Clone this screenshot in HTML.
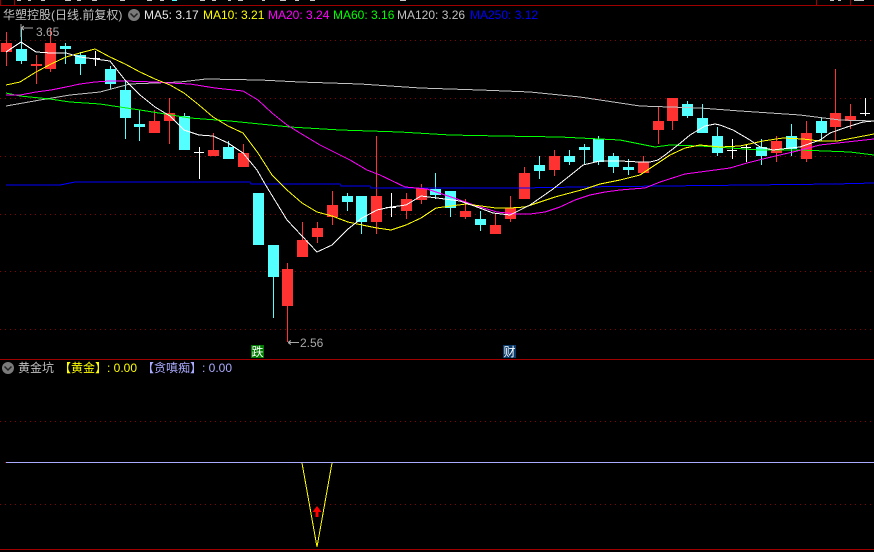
<!DOCTYPE html>
<html><head><meta charset="utf-8">
<style>
html,body{margin:0;padding:0;background:#000;}
#p{position:relative;width:874px;height:552px;overflow:hidden;background:#000;font-family:"Liberation Sans","WenQuanYi Zen Hei","Noto Sans CJK SC",sans-serif;font-size:12px;}
svg{position:absolute;left:0;top:0;}
.t{position:absolute;white-space:nowrap;line-height:14px;}
</style></head><body><div id="p">
<svg width="874" height="552" viewBox="0 0 874 552">
<g shape-rendering="crispEdges">
<rect x="0" y="5" width="874" height="1" fill="#a00000"/>
<rect x="0" y="0" width="1" height="5" fill="#a00000"/>
<rect x="14" y="0" width="1" height="5" fill="#a00000"/>
<rect x="816" y="0" width="1" height="5" fill="#a00000"/>
<rect x="850" y="0" width="1" height="5" fill="#a00000"/>
<rect x="0" y="359" width="874" height="1" fill="#a00000"/>
<rect x="0" y="549" width="874" height="1" fill="#a00000"/>
<g stroke="#8a0000" stroke-width="1" stroke-dasharray="1 4">
<path d="M0 40.5H874M0 98.5H874M0 156.5H874M0 214.5H874M0 271.5H874M0 329.5H874M0 421.5H874M0 504.5H874"/>
</g>
<path fill="#c8c8c8" d="M17 0h4v1h-4zM28 0h3v1h-3zM41 0h4v1h-4zM65 0h6v1h-6zM77 0h4v1h-4zM92 0h5v1h-5zM120 0h5v1h-5zM147 0h5v1h-5zM160 0h4v1h-4zM200 0h5v1h-5zM212 0h4v1h-4zM228 0h3v1h-3zM238 0h5v1h-5zM262 0h3v1h-3zM280 0h6v1h-6zM295 0h4v1h-4zM310 0h5v1h-5zM400 0h6v1h-6zM830 0h4v1h-4zM838 0h3v1h-3zM854 0h10v1h-10z"/>
<path fill="#54ffff" d="M172 0h5v1h-5z"/>

<!-- red candles -->
<path fill="#ff3232" d="M6 32h1v34h-1zM1 43h11v9h-11zM36 55h1v29h-1zM31 64h11v2h-11zM50 28h1v44h-1zM45 43h11v26h-11zM154 110h1v23h-1zM149 121h11v12h-11zM169 98h1v46h-1zM164 113h11v8h-11zM213 133h1v23h-1zM208 150h11v6h-11zM243 144h1v23h-1zM238 153h11v14h-11zM287 263h1v79h-1zM282 269h11v37h-11zM302 222h1v35h-1zM297 240h11v17h-11zM317 222h1v21h-1zM312 228h11v9h-11zM332 191h1v34h-1zM327 205h11v12h-11zM376 136h1v98h-1zM371 196h11v26h-11zM406 193h1v26h-1zM401 199h11v12h-11zM421 184h1v20h-1zM416 188h11v12h-11zM465 199h1v20h-1zM460 211h11v6h-11zM495 214h1v20h-1zM490 225h11v9h-11zM510 196h1v26h-1zM505 208h11v11h-11zM524 167h1v32h-1zM519 173h11v26h-11zM554 150h1v26h-1zM549 156h11v14h-11zM643 156h1v17h-1zM638 162h11v11h-11zM658 107h1v37h-1zM653 121h11v9h-11zM672 98h1v32h-1zM667 98h11v23h-11zM776 136h1v26h-1zM771 141h11v12h-11zM806 121h1v41h-1zM801 133h11v26h-11zM835 69h1v72h-1zM830 113h11v14h-11zM850 104h1v25h-1zM845 116h11v5h-11z"/>
<!-- cyan candles -->
<path fill="#54ffff" d="M21 27h1v37h-1zM16 49h11v12h-11zM65 43h1v21h-1zM60 46h11v3h-11zM80 52h1v23h-1zM75 55h11v9h-11zM110 66h1v23h-1zM105 69h11v15h-11zM125 81h1v58h-1zM120 90h11v28h-11zM139 110h1v31h-1zM134 124h11v3h-11zM184 113h1v37h-1zM179 116h11v34h-11zM228 141h1v18h-1zM223 147h11v12h-11zM253 193h11v52h-11zM273 245h1v73h-1zM268 245h11v32h-11zM347 193h1v18h-1zM342 196h11v6h-11zM361 196h1v38h-1zM356 196h11v26h-11zM435 173h1v26h-1zM430 189h11v6h-11zM450 191h1v26h-1zM445 191h11v17h-11zM480 211h1v20h-1zM475 219h11v6h-11zM539 156h1v23h-1zM534 165h11v6h-11zM569 150h1v15h-1zM564 156h11v6h-11zM584 144h1v21h-1zM579 147h11v3h-11zM598 136h1v29h-1zM593 139h11v23h-11zM613 153h1v20h-1zM608 156h11v11h-11zM628 159h1v16h-1zM623 167h11v3h-11zM687 101h1v17h-1zM682 104h11v12h-11zM702 104h1v29h-1zM697 118h11v15h-11zM717 127h1v29h-1zM712 136h11v17h-11zM761 139h1v26h-1zM756 147h11v9h-11zM791 124h1v32h-1zM786 136h11v13h-11zM821 118h1v23h-1zM816 121h11v12h-11z"/>
<!-- white crosses -->
<path fill="#fff" d="M95 51h1v15h-1zM90 58h10v1h-10zM199 147h1v32h-1zM194 152h10v1h-10zM391 193h1v24h-1zM386 207h10v1h-10zM732 139h1v20h-1zM727 150h10v1h-10zM746 144h1v18h-1zM741 147h10v1h-10zM865 98h1v18h-1zM860 113h10v1h-10z"/>
</g>
<g fill="none" stroke-width="1" shape-rendering="crispEdges">
<polyline stroke="#0000ff" points="6,185 60,185 75,182 250,182 251,184 340,184 341,186 370,186 371,188 520,188 580,187 665,186 835,184 874,183"/>
<polyline stroke="#c0c0c0" points="6,106 40,100 70,95 100,92 130,84 180,82 206,79 260,80 300,82 360,84 420,88 480,90 530,92 580,97 640,106 700,108 740,111 800,115 840,120 874,121"/>
<polyline stroke="#00ff00" points="6,93 20,96 50,99 70,102 100,104 140,110 190,118 230,121 290,127 340,130 400,132 450,135 500,136 560,137 620,140 655,147 670,145 700,146 760,150 800,150 850,152 874,155"/>
<polyline stroke="#ff00ff" points="6,95 20,95 36,92 51,90 66,87 80,84 95,82 110,81 125,81 155,82 170,83 190,84 215,88 243,91 258,100 272,113 287,125 300,133 320,145 350,160 367,170 380,175 405,187 427,189 457,199 477,206 497,212 517,214 530,214 545,212 560,207 575,200 590,195 605,192 620,190 632,189 645,188 660,182 685,174 700,172 730,168 747,163 767,158 797,151 820,145 847,142 874,139"/>
<polyline stroke="#ffff00" points="6,85 20,82 36,72 51,64 66,57 80,53 95,49 110,57 125,64 140,72 155,79 170,85 184,93 199,105 213,117 228,126 243,133 258,153 272,175 287,190 302,203 317,212 332,216 348,222 362,225 377,228 391,230 406,225 421,218 436,208 451,206 466,204 481,206 496,208 510,208 525,207 540,202 555,197 570,193 585,189 600,184 620,180 640,175 655,165 670,155 685,148 700,145 720,147 740,146 763,141 783,138 803,139 820,141 837,141 853,138 874,134"/>
<polyline stroke="#ffffff" points="6,52 21,42 36,52 51,53 66,53 80,57 95,59 110,61 125,80 140,95 155,107 170,116 184,130 199,135 213,136 228,143 243,153 257,170 265,184 287,220 317,252 332,245 348,229 362,218 377,210 391,207 406,205 421,196 437,198 460,201 477,207 493,213 510,215 530,205 553,189 577,170 583,165 600,161 620,161 640,162 650,162 658,160 665,155 678,145 690,135 705,126 715,124 720,125 733,130 750,140 760,147 773,150 800,147 820,140 830,133 847,127 863,122 874,121"/>
<!-- lower panel -->
<path stroke="#aaaaff" d="M6 462.5H874"/>
<polyline stroke="#ffff00" points="302,463 317,547 332,463"/>
<!-- price pointers -->
<path stroke="#a8a8a8" d="M21 24V37M21 28h12M21 28l3 -2M21 28l3 2M288 342.5h11M288 342.5l3 -2M288 342.5l3 2"/>
</g>
<rect x="5" y="462" width="1" height="1" fill="#8a0000"/>
<path fill="#ff0000" d="M317 506l4.500 6h-3v5h-3v-5h-3z"/>
<!-- dropdown icons -->
<circle cx="134" cy="15" r="6" fill="#7a7a7a"/>
<path d="M130.500 13.500l3.500 3.500l3.500-3.500" fill="none" stroke="#222" stroke-width="1.500"/>
<circle cx="8" cy="368" r="6" fill="#7a7a7a"/>
<path d="M4.500 366.500l3.500 3.500l3.500-3.500" fill="none" stroke="#222" stroke-width="1.500"/>
<rect x="251" y="345" width="13" height="13" fill="#007a00"/>
<rect x="503" y="345" width="13" height="13" fill="#0a3a6a"/>
</svg>
<span class="t" style="left:3px;top:8px;color:#c0c0c0;">华塑控股(日线.前复权)</span>
<span class="t" style="left:144px;top:8px;color:#e8e8e8;">MA5: 3.17</span>
<span class="t" style="left:203px;top:8px;color:#ffff00;">MA10: 3.21</span>
<span class="t" style="left:268px;top:8px;color:#ff00ff;">MA20: 3.24</span>
<span class="t" style="left:333px;top:8px;color:#00ff00;">MA60: 3.16</span>
<span class="t" style="left:397px;top:8px;color:#c0c0c0;">MA120: 3.26</span>
<span class="t" style="left:470px;top:8px;color:#0000ff;">MA250: 3.12</span>
<span class="t" style="left:36px;top:25px;color:#a8a8a8;">3.65</span>
<span class="t" style="left:300px;top:336px;color:#a8a8a8;">2.56</span>
<span class="t" style="left:251px;top:345px;width:13px;text-align:center;color:#fff;">跌</span>
<span class="t" style="left:503px;top:345px;width:13px;text-align:center;color:#fff;">财</span>
<span class="t" style="left:18px;top:361px;color:#c0c0c0;">黄金坑</span>
<span class="t" style="left:59px;top:361px;color:#ffff00;">【黄金】: 0.00</span>
<span class="t" style="left:142px;top:361px;color:#aaaaff;">【贪嗔痴】: 0.00</span>
</div></body></html>
